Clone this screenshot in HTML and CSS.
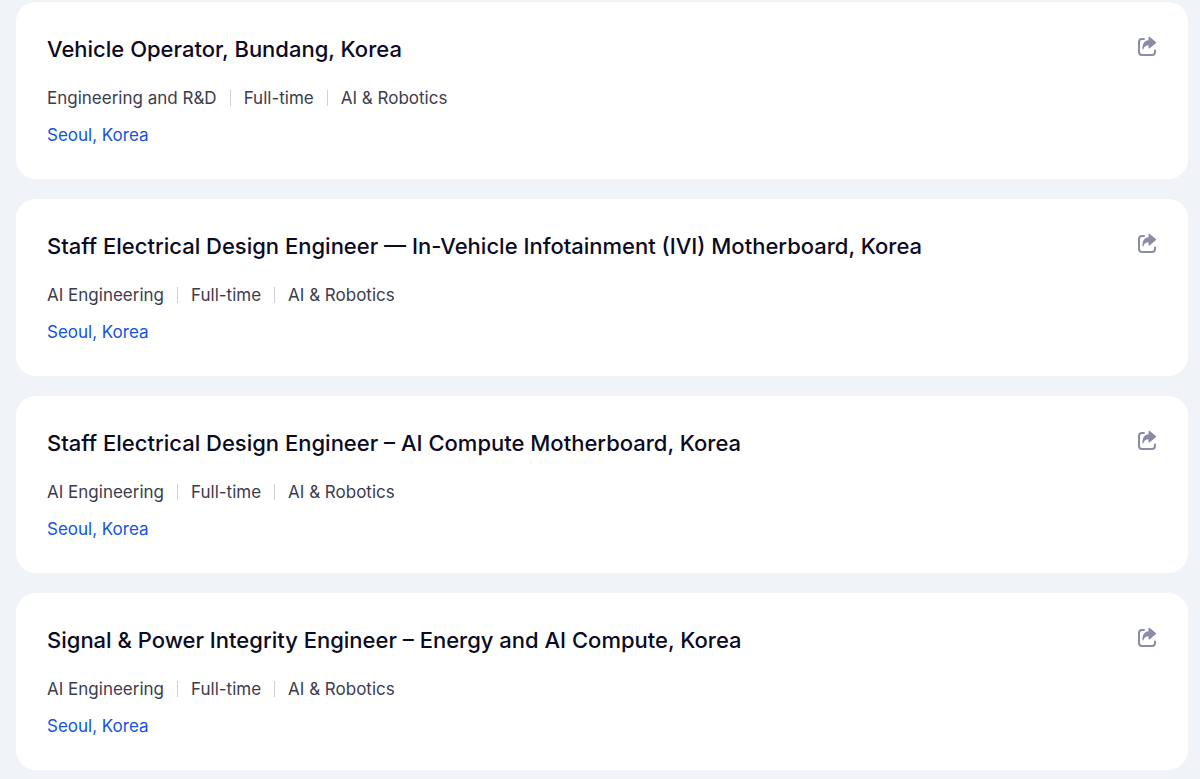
FILE: index.html
```
<!DOCTYPE html>
<html lang="en">
<head>
  <meta charset="utf-8">
  <meta name="viewport" content="width=device-width, initial-scale=1">
  <title>Open Positions</title>
  <link rel="stylesheet" href="styles.css">
</head>
<body>
  <svg class="sprite" aria-hidden="true">
    <symbol id="icon-share" viewBox="0 0 20 20">
      <path d="M7 3H5a3 3 0 0 0-3 3v10a3 3 0 0 0 3 3h10a3 3 0 0 0 3-3v-1.500" fill="none" stroke="currentColor" stroke-width="2" stroke-linecap="round"/>
      <path d="M11.500 1.600c0-.8.8-1 1.300-.5l6 5c.4.300.4.800 0 1.100l-6 5c-.5.500-1.300.200-1.300-.5V9.300c-2.700 0-4.300 1.200-5.200 3.900-.2.500-.9.400-.9-.2C5.300 7.900 7.500 4.600 11.500 4.300z" fill="currentColor"/>
    </symbol>
  </svg>

  <main class="job-list">
    <article class="job-card">
      <div class="job-info">
        <h2 class="job-title">Vehicle Operator, Bundang, Korea</h2>
        <ul class="job-meta">
          <li>Engineering and R&amp;D</li>
          <li>Full-time</li>
          <li>AI &amp; Robotics</li>
        </ul>
        <a class="job-location" href="#">Seoul, Korea</a>
      </div>
      <button class="share-button" type="button" aria-label="Share">
        <svg class="share-icon"><use href="#icon-share"/></svg>
      </button>
    </article>

    <article class="job-card">
      <div class="job-info">
        <h2 class="job-title">Staff Electrical Design Engineer — In-Vehicle Infotainment (IVI) Motherboard, Korea</h2>
        <ul class="job-meta">
          <li>AI Engineering</li>
          <li>Full-time</li>
          <li>AI &amp; Robotics</li>
        </ul>
        <a class="job-location" href="#">Seoul, Korea</a>
      </div>
      <button class="share-button" type="button" aria-label="Share">
        <svg class="share-icon"><use href="#icon-share"/></svg>
      </button>
    </article>

    <article class="job-card">
      <div class="job-info">
        <h2 class="job-title">Staff Electrical Design Engineer – AI Compute Motherboard, Korea</h2>
        <ul class="job-meta">
          <li>AI Engineering</li>
          <li>Full-time</li>
          <li>AI &amp; Robotics</li>
        </ul>
        <a class="job-location" href="#">Seoul, Korea</a>
      </div>
      <button class="share-button" type="button" aria-label="Share">
        <svg class="share-icon"><use href="#icon-share"/></svg>
      </button>
    </article>

    <article class="job-card">
      <div class="job-info">
        <h2 class="job-title">Signal &amp; Power Integrity Engineer – Energy and AI Compute, Korea</h2>
        <ul class="job-meta">
          <li>AI Engineering</li>
          <li>Full-time</li>
          <li>AI &amp; Robotics</li>
        </ul>
        <a class="job-location" href="#">Seoul, Korea</a>
      </div>
      <button class="share-button" type="button" aria-label="Share">
        <svg class="share-icon"><use href="#icon-share"/></svg>
      </button>
    </article>
  </main>
</body>
</html>
```
FILE: styles.css
```
body {
  margin: 0;
  background-color: #f0f4f9;
  color: #0b0b23;
  font-family: Inter, "Liberation Sans", sans-serif;
}
.sprite {
  display: none;
}
.job-list {
  display: flex;
  flex-direction: column;
  gap: 20px;
  padding: 2px 12px 9px 16px;
}
.job-card {
  display: flex;
  justify-content: space-between;
  align-items: flex-start;
  gap: 24px;
  padding: 31px;
  background-color: #fff;
  border-radius: 20px;
}
.job-title {
  margin: 0 0 20px;
  font-size: 22px;
  font-weight: 500;
  line-height: 32px;
}
.job-meta {
  display: flex;
  flex-wrap: wrap;
  margin: 0 0 11px;
  padding: 0;
  list-style: none;
  color: #3c3c4f;
  font-size: 17px;
  line-height: 26px;
}
.job-meta li {
  display: flex;
  align-items: center;
}
.job-meta li + li::before {
  content: "";
  width: 1px;
  height: 16px;
  margin: 0 13px;
  background-color: #d0d0da;
}
.job-location {
  display: block;
  color: #1554e0;
  font-size: 17px;
  line-height: 26px;
  text-decoration: none;
}
.share-button {
  flex: none;
  margin-top: 3px;
  padding: 0;
  border: 0;
  background: none;
  color: #8b8ba7;
  cursor: pointer;
}
.share-icon {
  display: block;
  width: 20px;
  height: 20px;
}
```
